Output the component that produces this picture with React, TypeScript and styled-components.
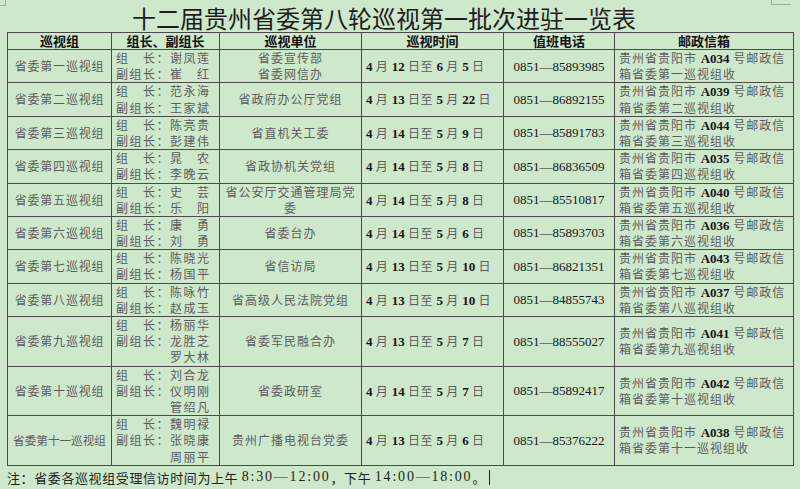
import React from 'react'
import styled, { createGlobalStyle } from 'styled-components'

const GlobalStyle = createGlobalStyle`
  html, body {
    margin: 0;
    padding: 0;
    background: #cee8cc;
  }
  body {
    font-family: "Noto Sans CJK SC", "Noto Sans", sans-serif;
    color: #222;
  }
`

type Row = {
    group: string
    leaders: string[]
    unit: string[]
    date: [string, string, string, string]
    phone: string
    box: string
    no: string
}

const rows: Row[] = [
    { group: '省委第一巡视组', leaders: ['谢凤莲', '崔　红'], unit: ['省委宣传部', '省委网信办'], date: ['4', '12', '6', '5'], phone: '85893985', box: 'A034', no: '一' },
    { group: '省委第二巡视组', leaders: ['范永海', '王家斌'], unit: ['省政府办公厅党组'], date: ['4', '13', '5', '22'], phone: '86892155', box: 'A039', no: '二' },
    { group: '省委第三巡视组', leaders: ['陈亮贵', '彭建伟'], unit: ['省直机关工委'], date: ['4', '14', '5', '9'], phone: '85891783', box: 'A044', no: '三' },
    { group: '省委第四巡视组', leaders: ['晁　农', '李晚云'], unit: ['省政协机关党组'], date: ['4', '14', '5', '8'], phone: '86836509', box: 'A035', no: '四' },
    { group: '省委第五巡视组', leaders: ['史　芸', '乐　阳'], unit: ['省公安厅交通管理局党', '委'], date: ['4', '14', '5', '8'], phone: '85510817', box: 'A040', no: '五' },
    { group: '省委第六巡视组', leaders: ['康　勇', '刘　勇'], unit: ['省委台办'], date: ['4', '14', '5', '6'], phone: '85893703', box: 'A036', no: '六' },
    { group: '省委第七巡视组', leaders: ['陈晓光', '杨国平'], unit: ['省信访局'], date: ['4', '13', '5', '10'], phone: '86821351', box: 'A043', no: '七' },
    { group: '省委第八巡视组', leaders: ['陈咏竹', '赵成玉'], unit: ['省高级人民法院党组'], date: ['4', '13', '5', '10'], phone: '84855743', box: 'A037', no: '八' },
    { group: '省委第九巡视组', leaders: ['杨丽华', '龙胜芝', '罗大林'], unit: ['省委军民融合办'], date: ['4', '13', '5', '7'], phone: '88555027', box: 'A041', no: '九' },
    { group: '省委第十巡视组', leaders: ['刘合龙', '仪明刚', '管绍凡'], unit: ['省委政研室'], date: ['4', '14', '5', '7'], phone: '85892417', box: 'A042', no: '十' },
    { group: '省委第十一巡视组', leaders: ['魏明禄', '张晓康', '周丽平'], unit: ['贵州广播电视台党委'], date: ['4', '13', '5', '6'], phone: '85376222', box: 'A038', no: '十一' },
]

const widths = [104, 108, 142, 142, 111, 179]
const headers = ['巡视组', '组长、副组长', '巡视单位', '巡视时间', '值班电话', '邮政信箱']
const labels = ['组　长：', '副组长：', '　　　　']

export default function App() {
    return (
        <Page>
            <GlobalStyle />
            <CornerLeft />
            <CornerRight />
            <Title>十二届贵州省委第八轮巡视第一批次进驻一览表</Title>
            <Table>
                <colgroup>
                    {widths.map((w, i) => (
                        <col key={i} style={{ width: w }} />
                    ))}
                </colgroup>
                <thead>
                    <tr>
                        {headers.map((h) => (
                            <Th key={h}>{h}</Th>
                        ))}
                    </tr>
                </thead>
                <tbody>
                    {rows.map((r) => (
                        <tr key={r.group}>
                            <Td $align="center">
                                <GroupName $tight={r.group.length > 7}>{r.group}</GroupName>
                            </Td>
                            <Td $align="left">
                                {r.leaders.map((n, i) => (
                                    <Line key={i} $spacing={1.5}>
                                        {labels[i]}
                                        {n}
                                    </Line>
                                ))}
                            </Td>
                            <Td $align="center">
                                {r.unit.map((u, i) => (
                                    <Line key={i} $spacing={1}>{u}</Line>
                                ))}
                            </Td>
                            <Td $align="left">
                                <Line $spacing={0.6}>
                                    <Num>{r.date[0]}</Num> 月 <Num>{r.date[1]}</Num> 日至 <Num>{r.date[2]}</Num> 月{' '}
                                    <Num>{r.date[3]}</Num> 日
                                </Line>
                            </Td>
                            <Td $align="center">
                                <Phone>0851—{r.phone}</Phone>
                            </Td>
                            <Td $align="left">
                                <Line $spacing={1}>
                                    贵州省贵阳市 <Num>{r.box}</Num> 号邮政信
                                </Line>
                                <Line $spacing={1}>箱省委第{r.no}巡视组收</Line>
                            </Td>
                        </tr>
                    ))}
                </tbody>
            </Table>
            <Note>
                注：省委各巡视组受理信访时间为上午 <Digits>8:30—12:00</Digits>，下午 <Digits>14:00—18:00</Digits>。<Caret />
            </Note>
        </Page>
    )
}

const Page = styled.div`
  position: relative;
  width: 800px;
  height: 489px;
  padding: 0 7px;
  box-sizing: border-box;
  overflow: hidden;
`

const CornerLeft = styled.div`
  position: absolute;
  left: 0;
  top: 0;
  width: 5px;
  height: 5px;
  border-right: 1px solid #9fb09e;
  border-bottom: 1px solid #9fb09e;
`

const CornerRight = styled.div`
  position: absolute;
  left: 771px;
  top: 0;
  width: 19px;
  height: 4px;
  border-left: 1px solid #9fb09e;
  border-bottom: 1px solid #9fb09e;
`

const Title = styled.h1`
  margin: 0;
  padding: 4px 32px 0 0;
  height: 28px;
  line-height: 28px;
  text-align: center;
  font-size: 24px;
  font-weight: 400;
  color: #1d1d1d;
  white-space: nowrap;
`

const Table = styled.table`
  width: 786px;
  table-layout: fixed;
  border-collapse: collapse;
  border: 1px solid #333;
`

const Th = styled.th`
  height: 16px;
  padding: 0;
  border: 1px solid #4a4a4a;
  font-size: 13px;
  line-height: 16px;
  font-weight: 700;
  color: #111;
  text-align: center;
`

const Td = styled.td<{ $align: 'left' | 'center' }>`
  padding: 0 4px;
  border: 1px solid #4a4a4a;
  vertical-align: middle;
  text-align: ${(p) => p.$align};
  font-size: 12px;
  line-height: 16.2px;
  color: #5c5c5c;
  white-space: nowrap;
  overflow: hidden;
`

const Line = styled.div<{ $spacing: number }>`
  height: 16.2px;
  line-height: 16.2px;
  letter-spacing: ${(p) => p.$spacing}px;
`

const GroupName = styled.span<{ $tight: boolean }>`
  font-size: ${(p) => (p.$tight ? 11.6 : 12)}px;
  letter-spacing: ${(p) => (p.$tight ? 0 : 0.8)}px;
`

const Num = styled.b`
  font-family: "Liberation Serif", serif;
  font-weight: 700;
  font-size: 13px;
  line-height: 1;
  letter-spacing: 0;
  color: #161616;
`

const Phone = styled.span`
  font-family: "Liberation Serif", "Noto Sans CJK SC", serif;
  font-size: 13px;
  color: #161616;
`

const Note = styled.div`
  display: flex;
  align-items: center;
  height: 23px;
  font-size: 13px;
  line-height: 1;
  letter-spacing: 0.6px;
  color: #1e1e1e;
  white-space: pre;
`

const Digits = styled.span`
  font-family: "Liberation Serif", serif;
  font-size: 14px;
  letter-spacing: 1.8px;
`

const Caret = styled.span`
  display: inline-block;
  width: 1px;
  height: 15px;
  margin-left: 3px;
  background: #222;
`
